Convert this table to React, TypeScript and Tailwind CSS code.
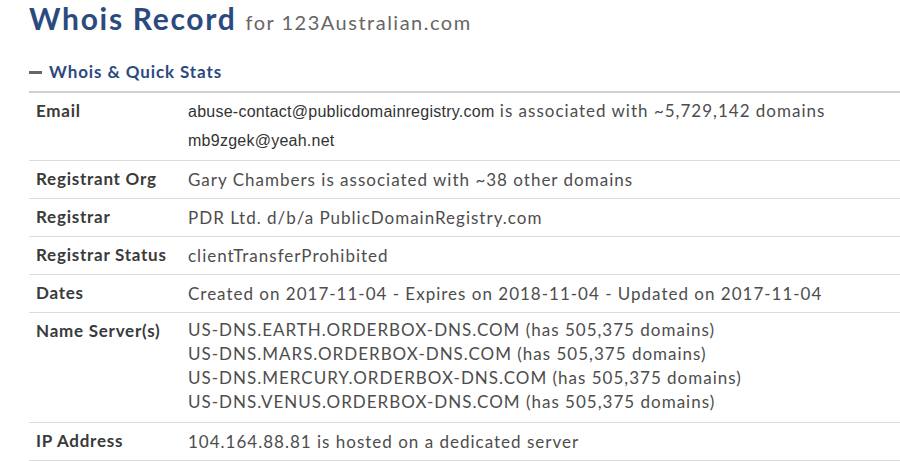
import React from "react";

const lato = { fontFamily: "Lato, 'Noto Sans', sans-serif" };

type Row = { label: string; values: React.ReactNode[]; kind?: "email" | "multi" };

const emailCls =
  "font-['Liberation_Sans',Arial,sans-serif] text-[16px] tracking-[0.25px] text-[#333]";

const rows: Row[] = [
  {
    label: "Email",
    kind: "email",
    values: [
      <>
        <span className={emailCls}>abuse-contact@publicdomainregistry.com</span>{" "}
        is associated with ~5,729,142 domains
      </>,
      <span className={emailCls}>mb9zgek@yeah.net</span>,
    ],
  },
  { label: "Registrant Org", values: ["Gary Chambers is associated with ~38 other domains"] },
  { label: "Registrar", values: ["PDR Ltd. d/b/a PublicDomainRegistry.com"] },
  { label: "Registrar Status", values: ["clientTransferProhibited"] },
  { label: "Dates", values: ["Created on 2017-11-04 - Expires on 2018-11-04 - Updated on 2017-11-04"] },
  {
    label: "Name Server(s)",
    kind: "multi",
    values: [
      "US-DNS.EARTH.ORDERBOX-DNS.COM (has 505,375 domains)",
      "US-DNS.MARS.ORDERBOX-DNS.COM (has 505,375 domains)",
      "US-DNS.MERCURY.ORDERBOX-DNS.COM (has 505,375 domains)",
      "US-DNS.VENUS.ORDERBOX-DNS.COM (has 505,375 domains)",
    ],
  },
  { label: "IP Address", values: ["104.164.88.81 is hosted on a dedicated server"] },
];

export default function App() {
  return (
    <div className="w-[900px] h-[461px] overflow-hidden bg-white" style={lato}>
      <div className="pl-[29px]">
        <h1 className="flex items-baseline gap-[9px] leading-[36px]">
          <span className="text-[30px] font-bold tracking-[1.7px] text-[#2b4a7e]">Whois Record</span>
          <span className="text-[20px] tracking-[1.5px] text-[#666]">for 123Australian.com</span>
        </h1>
        <div className="mt-[21px] flex items-center h-[22px]">
          <span className="w-[13px] h-[3px] bg-[#666] mr-[7px]" />
          <span className="text-[17px] font-bold tracking-[0.9px] text-[#2b4a7e]">
            Whois &amp; Quick Stats
          </span>
        </div>
        <div className="mt-[8px] border-t-2 border-[#d0d0d0]">
          {rows.map((r) => (
            <div key={r.label} className="flex border-b border-[#dcdcdc] text-[17px]">
              <div className="w-[159px] shrink-0 pl-[7px] pt-[8px] font-bold tracking-[0.75px] text-[#3a3a3a] leading-[19px]">
                {r.label}
              </div>
              <div
                className={`tracking-[1px] text-[#4d4d4d] ${
                  r.kind === "email"
                    ? "pt-[4px] pb-[5px] leading-[28px]"
                    : r.kind === "multi"
                    ? "pt-[5px] pb-[8px] leading-[24px]"
                    : "py-[9px] leading-[19px]"
                }`}
              >
                {r.values.map((v, i) => (
                  <div key={i}>{v}</div>
                ))}
              </div>
            </div>
          ))}
        </div>
      </div>
    </div>
  );
}
